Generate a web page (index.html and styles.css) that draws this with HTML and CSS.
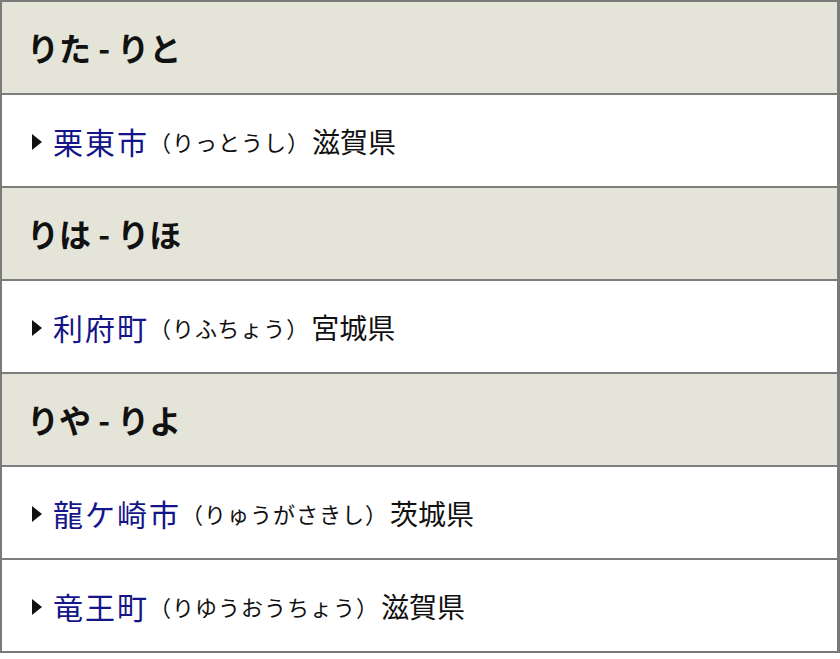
FILE: index.html
```html
<!DOCTYPE html>
<html lang="ja">
<head>
<meta charset="utf-8">
<link rel="stylesheet" href="styles.css">
</head>
<body>
<div class="list">
  <div class="row head">りた - りと</div>
  <div class="row item"><span class="tri"></span><a class="name">栗東市</a><span class="kana">（りっとうし）</span><span class="pref">滋賀県</span></div>
  <div class="row head">りは - りほ</div>
  <div class="row item"><span class="tri"></span><a class="name">利府町</a><span class="kana">（りふちょう）</span><span class="pref">宮城県</span></div>
  <div class="row head">りや - りよ</div>
  <div class="row item"><span class="tri"></span><a class="name">龍ケ崎市</a><span class="kana">（りゅうがさきし）</span><span class="pref">茨城県</span></div>
  <div class="row item"><span class="tri"></span><a class="name">竜王町</a><span class="kana">（りゆうおうちょう）</span><span class="pref">滋賀県</span></div>
</div>
</body>
</html>
```

FILE: styles.css
```css
html, body {
  margin: 0;
  padding: 0;
  background: #fff;
}
body {
  font-family: "Noto Sans CJK JP", "Noto Sans", sans-serif;
  color: #111;
}
.list {
  width: 840px;
  box-sizing: border-box;
  border: 2px solid #7a7a7a;
  border-right-width: 3px;
}
.row {
  height: 93px;
  box-sizing: border-box;
  display: flex;
  align-items: center;
  border-top: 2px solid #7d7d7d;
}
.row:first-child {
  border-top: none;
  height: 91px;
}
.head {
  background: #e4e4d8;
  padding-left: 25px;
  font-weight: bold;
  font-size: 32px;
  color: #111;
  padding-bottom: 1px;
}
.item {
  background: #fff;
  padding-left: 30px;
}
.tri {
  width: 0;
  height: 0;
  border-top: 8px solid transparent;
  border-bottom: 8px solid transparent;
  border-left: 10px solid #111;
  margin-right: 11px;
  margin-top: 3px;
}
.name {
  color: #15158a;
  font-size: 30px;
  letter-spacing: 2px;
}
.kana {
  font-size: 22px;
  letter-spacing: 1px;
  margin-left: 0;
}
.pref {
  font-size: 28px;
  margin-left: 2px;
}
```
